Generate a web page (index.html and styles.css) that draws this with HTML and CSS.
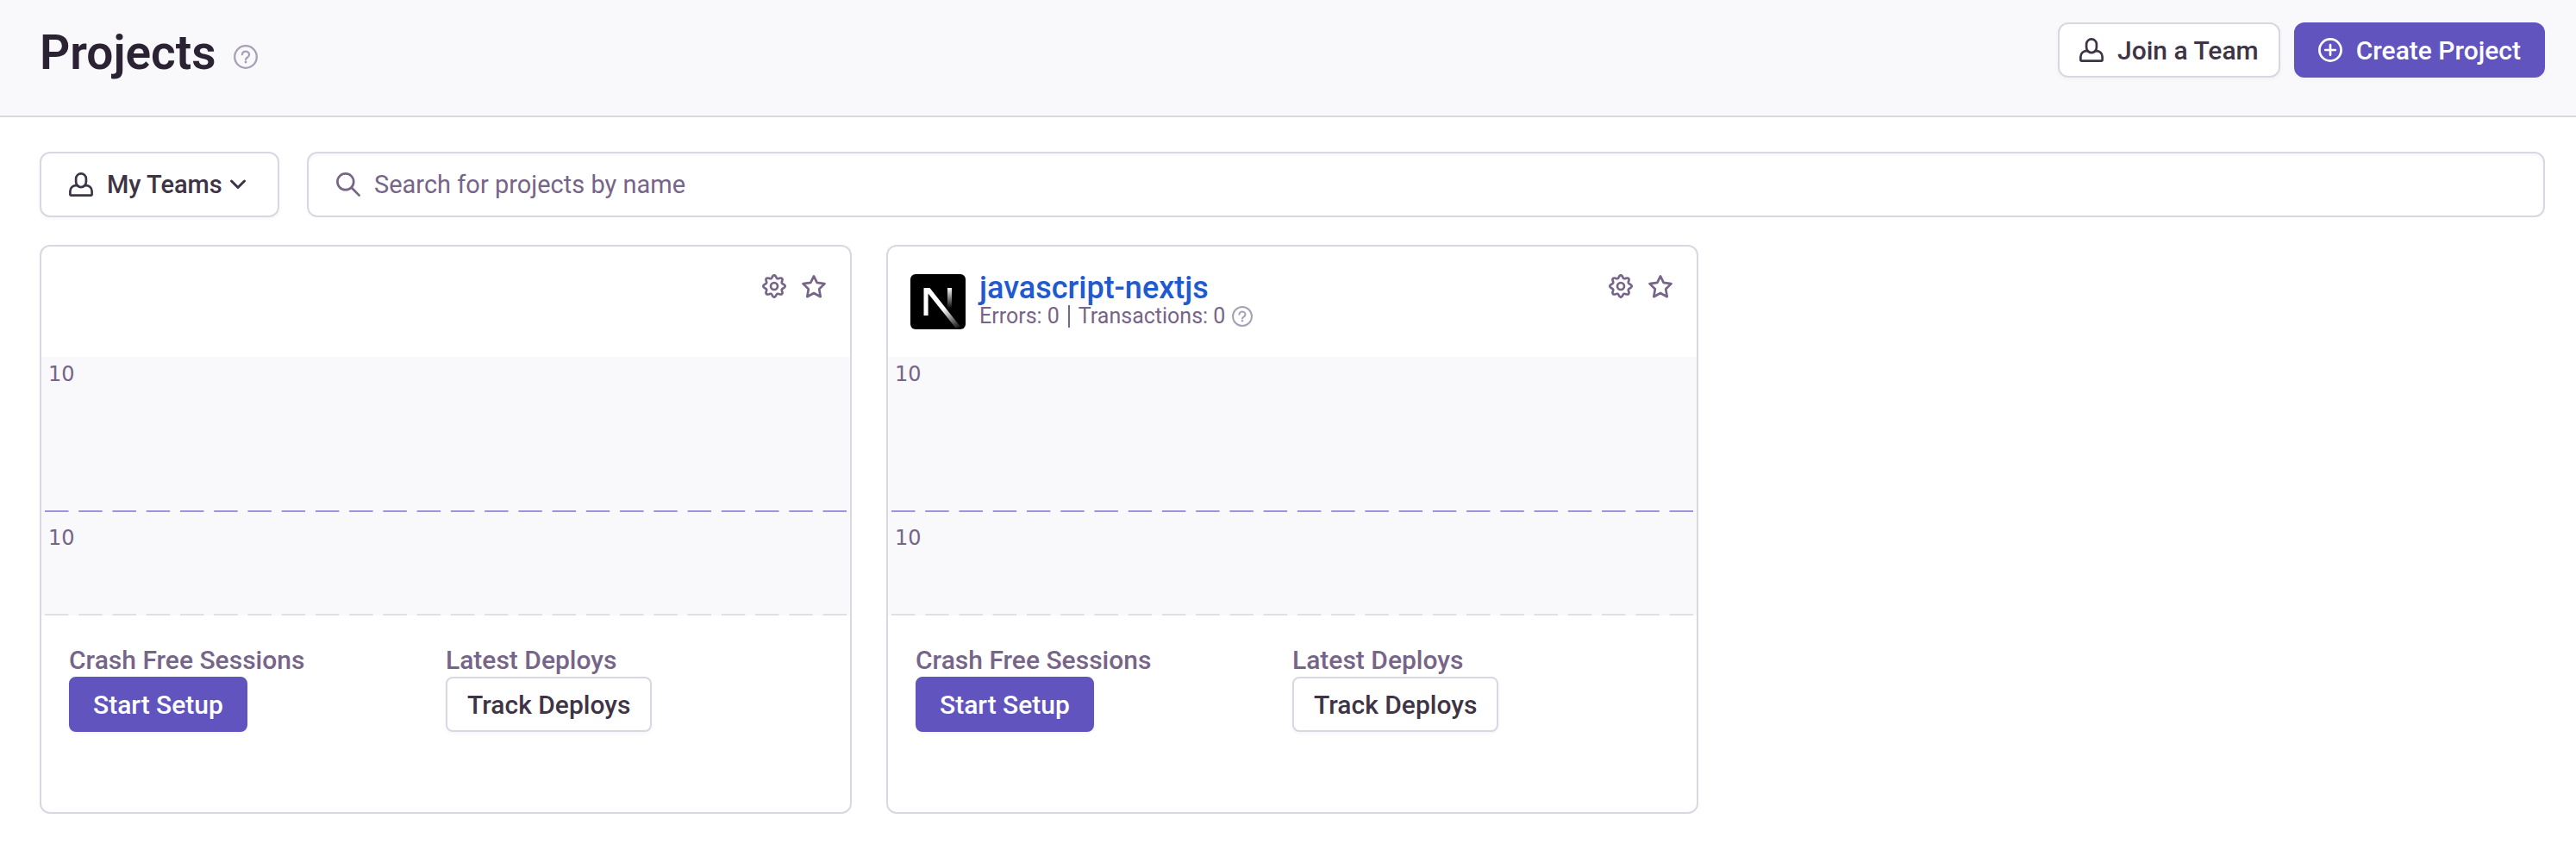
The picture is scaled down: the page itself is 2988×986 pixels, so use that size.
FILE: index.html
```html
<!DOCTYPE html>
<html lang="en">
<head>
<meta charset="utf-8">
<title>Projects</title>
<link rel="stylesheet" href="styles.css">
</head>
<body>
<svg class="symbols" aria-hidden="true">
  <symbol id="user" viewBox="0 0 28 28">
    <path d="M14 1.400a5.900 5.900 0 0 1 5.900 5.900v3.400c0 3.600-2.600 6.400-5.900 6.400s-5.900-2.800-5.900-6.400V7.300A5.900 5.900 0 0 1 14 1.400z"/>
    <path d="M9.600 15.200C4.700 14.600 1.400 17.600 1.400 21.700v3.600q0 1.300 1.300 1.300h22.600q1.300 0 1.300-1.300v-3.600c0-4.100-3.300-7.100-8.200-6.500"/>
  </symbol>
  <symbol id="plus" viewBox="0 0 28 28">
    <circle cx="14" cy="14" r="12.600"/>
    <path d="M14 8.200v11.600M8.200 14h11.600"/>
  </symbol>
  <symbol id="help" viewBox="0 0 28 28">
    <circle cx="14" cy="14" r="12.800"/>
    <path d="M9.900 11.300a4.100 3.700 0 1 1 6.300 3.100c-1.600 1-2.200 1.400-2.200 2.600"/>
    <circle class="dot" cx="14" cy="20" r="1.400"/>
  </symbol>
  <symbol id="chevron" viewBox="0 0 20 20">
    <path d="M2.500 6l7.500 7.500L17.500 6"/>
  </symbol>
  <symbol id="search" viewBox="0 0 28 28">
    <circle cx="10.800" cy="10.800" r="9.400"/>
    <path d="M17.800 17.800l8.800 8.800"/>
  </symbol>
  <symbol id="gear" viewBox="-14 -14 28 28">
    <path d="M-3.670 -8.870C-1.820 -9.640-2.400-12.700 0-12.700S1.820-9.640 3.670-8.870C5.520-8.100 7.290-10.690 8.990-8.990S8.100-5.520 8.870-3.670C9.640-1.820 12.700-2.400 12.700 0S9.640 1.820 8.870 3.670C8.100 5.520 10.690 7.290 8.990 8.990S5.520 8.100 3.670 8.870C1.820 9.640 2.400 12.700 0 12.700S-1.820 9.640-3.670 8.870C-5.520 8.100-7.290 10.690-8.990 8.990S-8.100 5.520-8.870 3.670C-9.640 1.820-12.700 2.400-12.700 0S-9.640-1.820-8.870-3.670C-8.100-5.520-10.690-7.290-8.990-8.990S-5.520-8.100-3.670-8.870z"/>
    <circle r="4"/>
  </symbol>
  <symbol id="star" viewBox="0 0 28 28">
    <path d="M14 2.400l3.700 7.500 8.800 1.200-6.300 6.200 1.500 8.900L14 22l-7.700 4.200 1.500-8.900-6.300-6.200 8.800-1.200z"/>
  </symbol>
</svg>

<header class="page-header">
  <div class="title-row">
    <h1 class="title">Projects</h1>
    <svg class="icon icon-help" role="img" aria-label="Help"><use href="#help"/></svg>
  </div>
  <div class="actions">
    <button class="button" type="button"><svg class="icon" aria-hidden="true"><use href="#user"/></svg>Join a Team</button>
    <button class="button button-primary" type="button"><svg class="icon" aria-hidden="true"><use href="#plus"/></svg>Create Project</button>
  </div>
</header>

<main class="content">
  <div class="filters">
    <button class="button team-filter" type="button"><svg class="icon" aria-hidden="true"><use href="#user"/></svg>My Teams<svg class="icon icon-chevron" aria-hidden="true"><use href="#chevron"/></svg></button>
    <label class="search">
      <svg class="icon" aria-hidden="true"><use href="#search"/></svg>
      <input class="search-input" type="text" aria-label="Search for projects by name" placeholder="Search for projects by name">
    </label>
  </div>

  <div class="cards">
    <section class="card">
      <div class="card-header">
        <div class="card-tools">
          <button class="icon-button" type="button" aria-label="Settings"><svg class="icon" aria-hidden="true"><use href="#gear"/></svg></button>
          <button class="icon-button" type="button" aria-label="Bookmark"><svg class="icon" aria-hidden="true"><use href="#star"/></svg></button>
        </div>
      </div>
      <div class="chart">
        <div class="chart-row chart-main"><span>10</span>
          <svg class="rule rule-accent" aria-hidden="true"><line x1="0" y1="1" x2="100%" y2="1" pathLength="237"/></svg>
        </div>
        <div class="chart-row chart-sub"><span>10</span>
          <svg class="rule" aria-hidden="true"><line x1="0" y1="1" x2="100%" y2="1" pathLength="237"/></svg>
        </div>
      </div>
      <div class="card-footer">
        <div><h3 class="stat-title">Crash Free Sessions</h3><button class="button button-primary button-small" type="button">Start Setup</button></div>
        <div><h3 class="stat-title">Latest Deploys</h3><button class="button button-small" type="button">Track Deploys</button></div>
      </div>
    </section>

    <section class="card">
      <div class="card-header">
        <svg class="platform" viewBox="0 0 64 64" role="img" aria-label="Next.js">
          <defs>
            <linearGradient id="diagonal" gradientUnits="userSpaceOnUse" x1="38" y1="40" x2="56" y2="65"><stop offset="0" stop-color="#fff"/><stop offset="1" stop-color="#fff" stop-opacity="0"/></linearGradient>
            <linearGradient id="stem" x1="0" y1="0" x2="0" y2="1"><stop offset="0" stop-color="#fff"/><stop offset="1" stop-color="#fff" stop-opacity="0"/></linearGradient>
          </defs>
          <rect width="64" height="64" rx="6"/>
          <path fill="url(#diagonal)" d="M15.500 16H22.500L58 61q-2 2-5 2L20.600 22.500V48h-5.100z"/>
          <path fill="url(#stem)" d="M43 16h5v24h-5z"/>
        </svg>
        <div class="project">
          <a class="project-name" href="#">javascript-nextjs</a>
          <div class="project-stats">
            <span>Errors: 0</span><span class="divider"></span><span>Transactions: 0</span>
            <svg class="icon icon-help icon-small" role="img" aria-label="Help"><use href="#help"/></svg>
          </div>
        </div>
        <div class="card-tools">
          <button class="icon-button" type="button" aria-label="Settings"><svg class="icon" aria-hidden="true"><use href="#gear"/></svg></button>
          <button class="icon-button" type="button" aria-label="Bookmark"><svg class="icon" aria-hidden="true"><use href="#star"/></svg></button>
        </div>
      </div>
      <div class="chart">
        <div class="chart-row chart-main"><span>10</span>
          <svg class="rule rule-accent" aria-hidden="true"><line x1="0" y1="1" x2="100%" y2="1" pathLength="237"/></svg>
        </div>
        <div class="chart-row chart-sub"><span>10</span>
          <svg class="rule" aria-hidden="true"><line x1="0" y1="1" x2="100%" y2="1" pathLength="237"/></svg>
        </div>
      </div>
      <div class="card-footer">
        <div><h3 class="stat-title">Crash Free Sessions</h3><button class="button button-primary button-small" type="button">Start Setup</button></div>
        <div><h3 class="stat-title">Latest Deploys</h3><button class="button button-small" type="button">Track Deploys</button></div>
      </div>
    </section>
  </div>
</main>
</body>
</html>
```
FILE: styles.css
```css
:root {
  --text: #3e3446;
  --muted: #776589;
  --accent: #6154be;
  --border: #d9d7e1;
  --panel: #f9f9fb;
}

* { box-sizing: border-box; }

body {
  margin: 0;
  background: #fff;
  color: var(--text);
  font-family: Roboto, "Liberation Sans", sans-serif;
  font-size: 30px;
}

.symbols { position: absolute; width: 0; height: 0; }

.icon {
  width: 28px;
  height: 28px;
  flex: none;
  fill: none;
  stroke: currentColor;
  stroke-width: 2.7px;
  stroke-linecap: round;
  stroke-linejoin: round;
}
.icon-help { color: #a79fb5; stroke-width: 2.3px; }
.icon-small { width: 24px; height: 24px; }
.icon-chevron { width: 20px; height: 20px; stroke-width: 3px; }
.dot { fill: currentColor; stroke: none; }

.page-header {
  display: flex;
  justify-content: space-between;
  align-items: flex-start;
  padding: 26px 36px 44px 46px;
  background: var(--panel);
  border-bottom: 2px solid var(--border);
}
.title-row { display: flex; align-items: center; gap: 20px; padding-top: 6px; }
.title {
  margin: 0;
  color: #2b2233;
  font-size: 55px;
  font-weight: 600;
  line-height: 58px;
}
.title-row .icon { margin-top: 10px; }
.actions { display: flex; gap: 16px; }

.button {
  display: inline-flex;
  align-items: center;
  justify-content: center;
  gap: 16px;
  height: 64px;
  padding: 0 23px;
  border: 2px solid var(--border);
  border-radius: 12px;
  background: #fff;
  color: var(--text);
  font: inherit;
  font-weight: 500;
  white-space: nowrap;
  box-shadow: 0 2px 4px rgba(43, 34, 51, .04);
}
.button-primary { padding: 0 26px; background: var(--accent); border-color: var(--accent); color: #fff; }
.button-small { border-radius: 8px; }

.content { padding: 40px 36px 42px 46px; }
.filters { display: flex; gap: 32px; margin-bottom: 32px; }
.team-filter {
  width: 278px;
  height: 76px;
  padding: 0 32px;
  justify-content: flex-start;
  font-size: 29px;
}
.team-filter .icon-chevron { margin-left: -8px; }

.search {
  display: flex;
  flex: 1;
  align-items: center;
  gap: 16px;
  height: 76px;
  padding: 0 32px;
  border: 2px solid var(--border);
  border-radius: 12px;
  color: var(--muted);
  box-shadow: inset 0 2px 4px rgba(43, 34, 51, .04);
}
.search-input {
  flex: 1;
  padding: 0;
  border: 0;
  outline: 0;
  background: none;
  color: var(--text);
  font: inherit;
  font-size: 29px;
}
.search-input::placeholder { color: var(--muted); opacity: 1; }

.cards { display: grid; grid-template-columns: repeat(3, 1fr); gap: 40px; }
.card { border: 2px solid var(--border); border-radius: 12px; }
.card-header {
  display: flex;
  align-items: flex-start;
  gap: 16px;
  height: 128px;
  padding: 32px 28px 0 26px;
}
.platform { width: 64px; height: 64px; flex: none; }
.project-name {
  display: block;
  color: #1f5acf;
  font-size: 36px;
  font-weight: 500;
  line-height: 32px;
  text-decoration: none;
}
.project-stats {
  display: flex;
  align-items: center;
  gap: 8px;
  color: var(--muted);
  font-size: 25px;
  line-height: 34px;
}
.divider { width: 2px; height: 26px; margin: 0 2px; background: currentColor; }
.card-tools { display: flex; gap: 18px; margin-left: auto; }
.icon-button { display: flex; padding: 0; border: 0; background: none; color: var(--muted); }

.chart {
  background: var(--panel);
  color: var(--muted);
  font-family: "DejaVu Sans", sans-serif;
  font-size: 24px;
  line-height: 28px;
}
.chart-row {
  display: flex;
  flex-direction: column;
  justify-content: space-between;
}
.chart-row span { padding-left: 8px; }
.chart-main { height: 180px; padding-top: 6px; }
.chart-sub { height: 120px; padding-top: 16px; }
.rule {
  width: 100%;
  height: 2px;
  padding: 0 4px;
  stroke: #e0dfe4;
  stroke-width: 2px;
  stroke-dasharray: 7 3;
}
.rule-accent { stroke: #a093dc; }

.card-footer {
  display: grid;
  grid-template-columns: 1fr 1fr;
  padding: 32px 32px 93px;
}
.stat-title {
  margin: 0;
  color: var(--muted);
  font-size: 30px;
  font-weight: 500;
  line-height: 39px;
}
```
